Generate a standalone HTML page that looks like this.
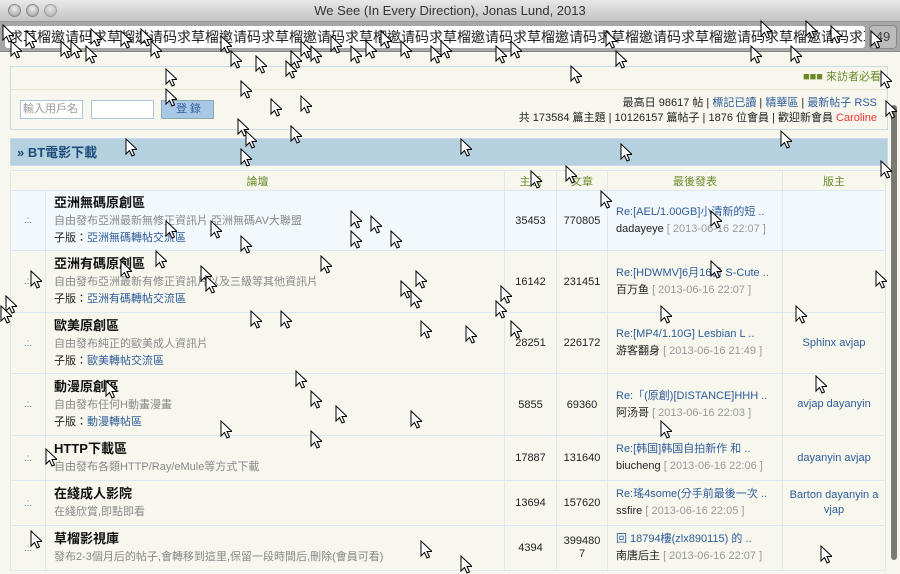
<!DOCTYPE html>
<html><head><meta charset="utf-8"><style>
*{margin:0;padding:0;box-sizing:border-box}
body{width:900px;height:560px;overflow:hidden;background:#f7f7ee;font-family:"Liberation Sans","Noto Sans CJK TC",sans-serif;font-size:11px;color:#222;position:relative}
.title{position:absolute;left:0;top:0;width:900px;height:22px;background:linear-gradient(#e8e8e8,#c4c4c4);text-align:center;font-size:13px;line-height:22px;color:#333;border-bottom:1px solid #999}
.dot{position:absolute;top:4px;width:13px;height:13px;border-radius:50%;background:radial-gradient(circle at 50% 35%,#eee,#999);border:1px solid #888}
.tool{position:absolute;left:0;top:22px;width:900px;height:30px;background:#a7a7a7;border-bottom:1px solid #888}
.field{position:absolute;left:5px;top:4px;width:860px;height:22px;background:#fff;border-radius:3px;font-size:14px;line-height:22px;white-space:nowrap;overflow:hidden;color:#222;padding-left:4px}
.btn49{position:absolute;left:869px;top:3px;width:28px;height:24px;border:1px solid #888;border-radius:4px;background:#bbb;font-size:13px;line-height:22px;text-align:center;color:#444}
.box{position:absolute;left:10px;top:66px;width:878px;height:64px;border:1px solid #c9dbe8;background:#f7f7ee}
.box .hd{height:23px;border-bottom:1px solid #e2e6d0;text-align:right;color:#6a8a2a;font-size:11px;line-height:20px;padding-right:6px}
.in{position:absolute;top:33px;height:19px;border:1px solid #a9c6de;background:#fff;font-size:11px;color:#999;line-height:17px;padding-left:2px}
.stats{position:absolute;right:10px;top:29px;text-align:right;line-height:15px;font-size:11px}
a{color:#2e5c99;text-decoration:none}
.bar{position:absolute;left:10px;top:138px;width:878px;height:28px;background:#b5d0de;border:1px solid #c9dbe8;color:#1d4b7a;font-weight:bold;font-size:13px;line-height:27px;padding-left:6px}
table{position:absolute;left:10px;top:170px;width:876px;border-collapse:collapse}
td,th{border:1px solid #dbe8f2;vertical-align:middle}
th{height:20px;font-weight:normal;color:#6a8a2a;font-size:11px;background:#f7f7ee}
td.ic{width:35px;text-align:center;color:#4a7ab0;font-size:10px}
td.f{padding-left:8px;line-height:17px}
td.f b{font-size:13px;color:#111}
td.f .d{color:#888}
td.n{text-align:center;font-size:11px}
td.l{padding-left:8px;line-height:17px;font-size:11px}
td.l .t{color:#999}
td.m{text-align:center;color:#2e5c99;font-size:11px;line-height:15px}
tr.a td{background:#f2f8fc}
.sb{position:absolute;left:891px;top:105px;width:6px;height:455px;background:#7a7a70;border-radius:3px}
.c{position:absolute;width:12px;height:19px}
</style></head><body>
<div class="title">We See (In Every Direction), Jonas Lund, 2013</div>
<div class="dot" style="left:8px"></div><div class="dot" style="left:26px"></div><div class="dot" style="left:44px;opacity:.7"></div>
<div class="tool"><div class="field">求草榴邀请码求草榴邀请码求草榴邀请码求草榴邀请码求草榴邀请码求草榴邀请码求草榴邀请码求草榴邀请码求草榴邀请码求草榴邀请码求草榴邀请码求草榴邀请码求草榴邀请码求草榴邀请码求</div><div class="btn49">49</div></div>
<div class="box"><div class="hd">■■■ 來訪者必看</div>
<div class="in" style="left:9px;width:63px">輸入用戶名</div>
<div class="in" style="left:80px;width:63px"></div>
<div class="in" style="left:150px;width:53px;background:#a9c8e6;color:#2e5c99;text-align:center;border-color:#8aa">登 錄</div>
<div class="stats">最高日 98617 帖 | <a>標記已讀</a> | <a>精華區</a> | <a>最新帖子</a> <a>RSS</a><br>共 173584 篇主題 | 10126157 篇帖子 | 1876 位會員 | 歡迎新會員 <span style="color:#e33">Caroline</span></div>
</div>
<div class="bar">» BT電影下載</div>
<table>
<tr><th colspan="2">論壇</th><th style="width:52px">主題</th><th style="width:51px">文章</th><th style="width:175px">最後發表</th><th style="width:103px">版主</th></tr>
<tr class="a" style="height:60px"><td class="ic">.:.</td><td class="f"><b>亞洲無碼原創區</b><br><span class="d">自由發布亞洲最新無修正資訊片 亞洲無碼AV大聯盟</span><br>子版：<a>亞洲無碼轉帖交流區</a></td><td class="n">35453</td><td class="n">770805</td><td class="l"><a>Re:[AEL/1.00GB]小清新的短 ..</a><br>dadayeye <span class="t">[ 2013-06-16 22:07 ]</span></td><td class="m"></td></tr>
<tr style="height:62px"><td class="ic">.:.</td><td class="f"><b>亞洲有碼原創區</b><br><span class="d">自由發布亞洲最新有修正資訊片以及三級等其他資訊片</span><br>子版：<a>亞洲有碼轉帖交流區</a></td><td class="n">16142</td><td class="n">231451</td><td class="l"><a>Re:[HDWMV]6月16日 S-Cute ..</a><br>百万鱼 <span class="t">[ 2013-06-16 22:07 ]</span></td><td class="m"></td></tr>
<tr style="height:61px"><td class="ic">.:.</td><td class="f"><b>歐美原創區</b><br><span class="d">自由發布純正的歐美成人資訊片</span><br>子版：<a>歐美轉帖交流區</a></td><td class="n">28251</td><td class="n">226172</td><td class="l"><a>Re:[MP4/1.10G] Lesbian L ..</a><br>游客翻身 <span class="t">[ 2013-06-16 21:49 ]</span></td><td class="m">Sphinx avjap</td></tr>
<tr style="height:62px"><td class="ic">.:.</td><td class="f"><b>動漫原創區</b><br><span class="d">自由發布任何H動畫漫畫</span><br>子版：<a>動漫轉帖區</a></td><td class="n">5855</td><td class="n">69360</td><td class="l"><a>Re:「(原創)[DISTANCE]HHH ..</a><br>阿汤哥 <span class="t">[ 2013-06-16 22:03 ]</span></td><td class="m">avjap dayanyin</td></tr>
<tr style="height:45px"><td class="ic">.:.</td><td class="f"><b>HTTP下載區</b><br><span class="d">自由發布各類HTTP/Ray/eMule等方式下載</span></td><td class="n">17887</td><td class="n">131640</td><td class="l"><a>Re:[韩国]韩国自拍新作 和 ..</a><br>biucheng <span class="t">[ 2013-06-16 22:06 ]</span></td><td class="m">dayanyin avjap</td></tr>
<tr style="height:45px"><td class="ic">.:.</td><td class="f"><b>在綫成人影院</b><br><span class="d">在綫欣賞,即點即看</span></td><td class="n">13694</td><td class="n">157620</td><td class="l"><a>Re:瑤4some(分手前最後一次 ..</a><br>ssfire <span class="t">[ 2013-06-16 22:05 ]</span></td><td class="m">Barton dayanyin a<br>vjap</td></tr>
<tr style="height:45px"><td class="ic">.:.</td><td class="f"><b>草榴影視庫</b><br><span class="d">發布2-3個月后的帖子,會轉移到這里,保留一段時間后,刪除(會員可看)</span></td><td class="n">4394</td><td class="n" style="line-height:13px">399480<br>7</td><td class="l"><a>回 18794樓(zlx890115) 的 ..</a><br>南唐后主 <span class="t">[ 2013-06-16 22:07 ]</span></td><td class="m"></td></tr>
</table>
<div class="sb"></div>
<svg width="0" height="0" style="position:absolute"><defs><symbol id="k" viewBox="0 0 12 19"><path d="M1 1V16L4.5 12.5L7 18L9.5 17L7 11.5H12Z" fill="#fff" stroke="#000" stroke-width="1"/></symbol></defs></svg>
<div id="cs"></div>
<script>
var p=[[2,24],[10,40],[25,30],[60,40],[90,28],[70,40],[85,45],[120,30],[150,40],[140,28],[220,35],[230,50],[255,55],[285,60],[300,40],[290,50],[310,45],[330,35],[350,45],[365,40],[380,30],[400,40],[440,40],[430,45],[495,45],[510,40],[570,65],[605,30],[615,50],[750,45],[760,20],[790,45],[805,20],[830,25],[870,30],[880,70],[885,100],[880,160],[165,68],[165,88],[240,80],[270,98],[300,95],[237,118],[245,130],[290,125],[240,148],[125,138],[460,138],[565,165],[620,143],[780,130],[600,190],[530,170],[350,210],[370,215],[350,230],[390,230],[210,220],[165,220],[240,235],[155,250],[120,260],[200,265],[205,275],[320,255],[415,270],[400,280],[410,290],[500,285],[495,300],[30,270],[5,295],[0,305],[875,270],[250,310],[280,310],[420,320],[465,325],[510,320],[660,305],[795,305],[295,370],[310,390],[335,405],[410,410],[310,430],[220,420],[105,380],[660,420],[710,210],[710,260],[45,448],[815,375],[820,545],[30,530],[420,540],[460,555]];
var h='';p.forEach(function(a){h+='<svg class="c" style="left:'+a[0]+'px;top:'+a[1]+'px"><use href="#k"/></svg>'});document.getElementById('cs').innerHTML=h;
</script>
</body></html>
